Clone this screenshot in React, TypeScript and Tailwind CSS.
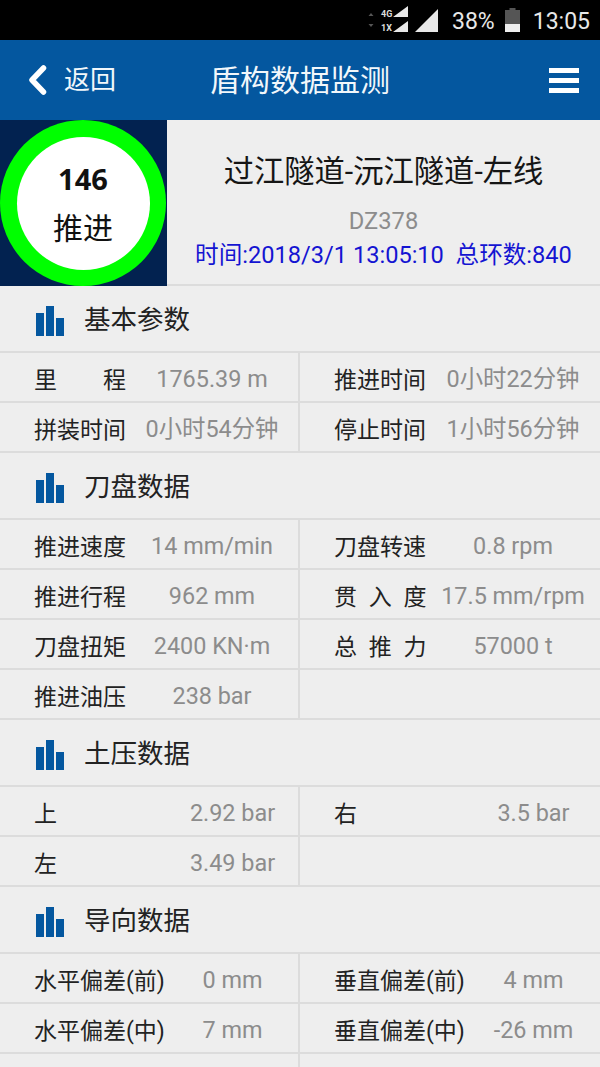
const cjk = "font-['Roboto','Noto_Sans_CJK_SC',sans-serif]"

type Cell = { label: string; value: string }
type Row = [Cell, Cell | null]

interface Section {
  title: string
  labelWidth: string
  rows: Row[]
}

const sections: Section[] = [
  {
    title: '基本参数',
    labelWidth: 'w-[92px]',
    rows: [
      [{ label: '里\u3000\u3000程', value: '1765.39 m' }, { label: '推进时间', value: '0小时22分钟' }],
      [{ label: '拼装时间', value: '0小时54分钟' }, { label: '停止时间', value: '1小时56分钟' }],
    ],
  },
  {
    title: '刀盘数据',
    labelWidth: 'w-[92px]',
    rows: [
      [{ label: '推进速度', value: '14 mm/min' }, { label: '刀盘转速', value: '0.8 rpm' }],
      [{ label: '推进行程', value: '962 mm' }, { label: '贯\u2002入\u2002度', value: '17.5 mm/rpm' }],
      [{ label: '刀盘扭矩', value: '2400 KN·m' }, { label: '总\u2002推\u2002力', value: '57000 t' }],
      [{ label: '推进油压', value: '238 bar' }, null],
    ],
  },
  {
    title: '土压数据',
    labelWidth: 'w-[133px]',
    rows: [
      [{ label: '上', value: '2.92 bar' }, { label: '右', value: '3.5 bar' }],
      [{ label: '左', value: '3.49 bar' }, null],
    ],
  },
  {
    title: '导向数据',
    labelWidth: 'w-[133px]',
    rows: [
      [{ label: '水平偏差(前)', value: '0 mm' }, { label: '垂直偏差(前)', value: '4 mm' }],
      [{ label: '水平偏差(中)', value: '7 mm' }, { label: '垂直偏差(中)', value: '-26 mm' }],
      [{ label: '', value: '' }, null],
    ],
  },
]

function StatusBar() {
  return (
    <div className="flex h-10 items-center justify-end bg-black pr-[10px] text-[#e8e8e8]">
      <svg width="41" height="28" viewBox="0 0 41 28" className="mr-[7px]">
        <path d="M4 7 L6.5 10 H1.5 Z M4 21 L1.5 18 H6.5 Z" fill="#555" />
        <text x="14" y="11" fontSize="9" fontWeight="700" fill="#ddd" fontFamily="Roboto">4G</text>
        <text x="14" y="25" fontSize="9" fontWeight="700" fill="#ddd" fontFamily="Roboto">1X</text>
        <path d="M26 11 L41 0 V11 Z M26 26 L41 15 V26 Z" fill="#e8e8e8" />
      </svg>
      <svg width="23" height="23" viewBox="0 0 23 23" className="mr-[14px]">
        <path d="M0 23 L23 0 V23 Z" fill="#e8e8e8" />
      </svg>
      <span className="mr-[10px] pt-[2px] text-[23px] leading-none font-['Roboto',sans-serif]">38%</span>
      <svg width="15" height="24" viewBox="0 0 15 24" className="mr-[13px]">
        <path d="M4.5 0 H10.5 V2 H15 V24 H0 V2 H4.5 Z" fill="#555" />
        <path d="M0 16 H15 V24 H0 Z" fill="#eee" />
      </svg>
      <span className="pt-[2px] text-[23px] leading-none font-['Roboto',sans-serif]">13:05</span>
    </div>
  )
}

function Header() {
  return (
    <div className={`flex h-20 items-center justify-between bg-[#04579f] pl-[28px] pr-[21px] text-[#f2f7fb] ${cjk}`}>
      <div className="flex w-[150px] items-center">
        <svg width="19" height="30" viewBox="0 0 19 30" fill="none">
          <path d="M15.5 3 L4 15 L15.5 27" stroke="white" strokeWidth="5.5" strokeLinecap="round" strokeLinejoin="round" />
        </svg>
        <span className="ml-[17px] text-[26px] leading-none">返回</span>
      </div>
      <span className="pt-[2px] text-[30px] leading-none">盾构数据监测</span>
      <div className="flex w-[157px] justify-end">
        <div className="flex w-[30px] flex-col gap-[5px]">
          <div className="h-[5px] bg-white" />
          <div className="h-[5px] bg-white" />
          <div className="h-[5px] bg-white" />
        </div>
      </div>
    </div>
  )
}

function Hero() {
  return (
    <div className={`flex h-[166px] ${cjk}`}>
      <div className="h-[166px] w-[167px] shrink-0 bg-[#022250]">
        <div className="flex h-[166px] w-[166px] items-center justify-center rounded-full bg-[#00ff00]">
          <div className="flex h-[133px] w-[133px] flex-col items-center justify-center rounded-full bg-white text-[#111]">
            <span className="text-[29px] font-bold leading-[52px] font-['Noto_Sans',sans-serif]">146</span>
            <span className="text-[30px] leading-[48px]">推进</span>
          </div>
        </div>
      </div>
      <div className="flex flex-1 flex-col items-center border-b-2 border-[#dcdcdc] pt-[31px]">
        <span className="text-[30.3px] leading-[42px] text-[#151515]">过江隧道-沅江隧道-左线</span>
        <span className="mt-[12px] text-[23.7px] leading-[32px] text-[#8c8c8c]">DZ378</span>
        <span className="mt-[1px] whitespace-nowrap text-[23.6px] leading-[34px] text-[#1414d2]">时间:2018/3/1 13:05:10&nbsp; 总环数:840</span>
      </div>
    </div>
  )
}

function BarsIcon() {
  return (
    <svg width="30" height="30" viewBox="0 0 30 30" fill="#04579f">
      <rect x="1" y="7" width="8" height="23" />
      <rect x="11" y="0" width="8" height="30" />
      <rect x="21" y="12" width="8" height="18" />
    </svg>
  )
}

function DataCell({ cell, labelWidth, first }: { cell: Cell | null; labelWidth: string; first?: boolean }) {
  return (
    <div className={`flex items-center pt-[6px] pl-[34px] ${first ? 'w-[300px] border-r-2 border-[#dcdcdc]' : 'flex-1'}`}>
      {cell && (
        <>
          <span className={`${labelWidth} shrink-0 whitespace-pre text-[23px] leading-none text-[#222]`}>
            {cell.label}
          </span>
          <span className="flex-1 whitespace-nowrap text-center text-[23.4px] leading-none text-[#8c8c8c]">
            {cell.value}
          </span>
        </>
      )}
    </div>
  )
}

function DataSection({ section }: { section: Section }) {
  return (
    <div>
      <div className="flex h-[67px] items-center gap-[19px] border-b-2 border-[#dcdcdc] pl-[35px] pt-[4px]">
        <BarsIcon />
        <span className="text-[26.5px] leading-none text-[#222]">{section.title}</span>
      </div>
      {section.rows.map((row, i) => (
        <div key={i} className="flex h-[50px] border-b-2 border-[#dcdcdc]">
          <DataCell cell={row[0]} labelWidth={section.labelWidth} first />
          <DataCell cell={row[1]} labelWidth={section.labelWidth} />
        </div>
      ))}
    </div>
  )
}

export default function App() {
  return (
    <div className={`h-[1067px] w-[600px] overflow-hidden bg-[#eeeeee] ${cjk}`}>
      <StatusBar />
      <Header />
      <Hero />
      {sections.map((s) => (
        <DataSection key={s.title} section={s} />
      ))}
    </div>
  )
}
